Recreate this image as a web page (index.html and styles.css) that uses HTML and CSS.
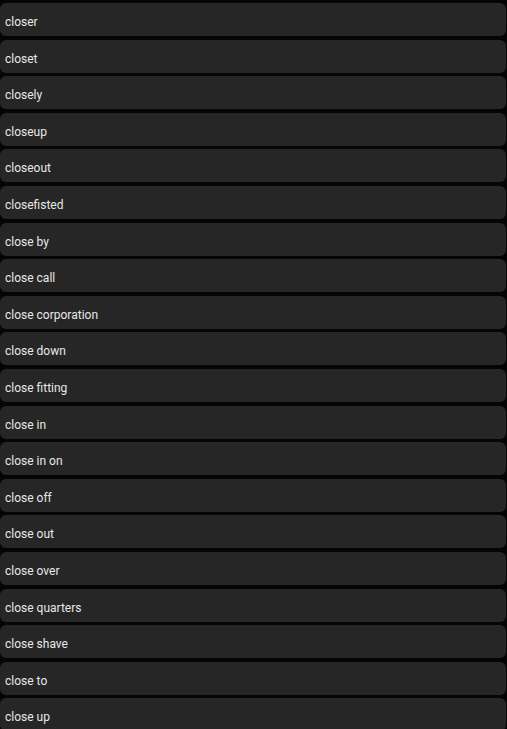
FILE: index.html
```html
<!DOCTYPE html>
<html>
<head>
<meta charset="utf-8">
<link rel="stylesheet" href="styles.css">
</head>
<body>
<ul class="list">
<li class="item">closer</li>
<li class="item">closet</li>
<li class="item">closely</li>
<li class="item">closeup</li>
<li class="item">closeout</li>
<li class="item">closefisted</li>
<li class="item">close by</li>
<li class="item">close call</li>
<li class="item">close corporation</li>
<li class="item">close down</li>
<li class="item">close fitting</li>
<li class="item">close in</li>
<li class="item">close in on</li>
<li class="item">close off</li>
<li class="item">close out</li>
<li class="item">close over</li>
<li class="item">close quarters</li>
<li class="item">close shave</li>
<li class="item">close to</li>
<li class="item">close up</li>
</ul>
</body>
</html>
```
FILE: styles.css
```css
html, body {
  margin: 0;
  padding: 0;
  background: #050505;
  overflow: hidden;
}
.list {
  list-style: none;
  margin: 0;
  padding: 3px 1px 0 0;
  display: flex;
  flex-direction: column;
  gap: 3.6px;
}
.item {
  height: 33px;
  box-sizing: border-box;
  background: #262626;
  border-radius: 6px;
  padding: 5px 0 0 5px;
  display: flex;
  align-items: center;
  font-family: Roboto, sans-serif;
  font-size: 12px;
  color: #e8e8e8;
}
```
